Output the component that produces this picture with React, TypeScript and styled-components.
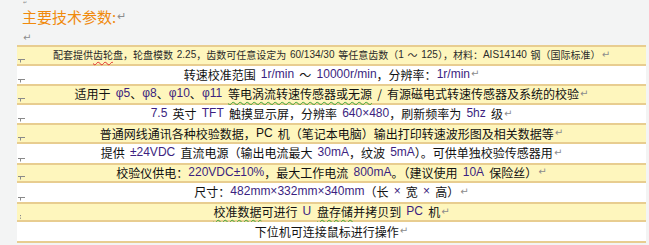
import React from "react";
import styled, { createGlobalStyle } from "styled-components";

const GlobalStyle = createGlobalStyle`
  html, body { margin: 0; padding: 0; background: #f3f4f4; }
  body { font-family: "Liberation Sans", "Noto Sans CJK SC", sans-serif; }
`;

const Page = styled.div`
  width: 649px;
  height: 245px;
  overflow: hidden;
  box-sizing: border-box;
  padding-left: 17px;
`;

const Para = styled.div<{ $h: number }>`
  height: ${(p) => p.$h}px;
  padding-left: 5px;
  display: flex;
  align-items: flex-end;
  overflow: hidden;
`;

const Title = styled.div`
  height: 23px;
  line-height: 23px;
  padding-left: 5px;
  font-family: "Noto Sans CJK SC", sans-serif;
  font-size: 15px;
  color: #f08a0c;
  display: flex;
  align-items: center;
`;

const PMark = styled.span<{ $size?: number; $lh?: number }>`
  font-family: "DejaVu Sans", sans-serif;
  font-size: ${(p) => p.$size ?? 10}px;
  line-height: ${(p) => p.$lh ?? 14}px;
  color: #8c8c8c;
  margin-left: 1px;
`;

const Table = styled.div`
  width: 629px;
  border-bottom: 2px solid #e8cd90;
`;

const Row = styled.div<{ $alt: boolean; $small?: boolean }>`
  position: relative;
  box-sizing: border-box;
  height: ${(p) => (p.$alt ? 20.5 : 18.7)}px;
  background: ${(p) => (p.$alt ? "#fef6bd" : "#ffffff")};
  border-top: ${(p) => (p.$alt ? "2px solid #e8cd90" : "none")};
  border-bottom: ${(p) => (p.$alt ? "2px solid #e8cd90" : "none")};
  display: flex;
  align-items: center;
  justify-content: center;
  padding-bottom: 1px;
  white-space: pre;
  word-spacing: ${(p) => (p.$small ? 1.5 : 2.5)}px;
  font-family: "Noto Sans CJK SC", sans-serif;
  font-size: ${(p) => (p.$small ? 10 : 12)}px;
  line-height: 15px;
  color: ${(p) => (p.$small ? "#2b2b2b" : "#111111")};
`;

const L = styled.span`
  font-family: "Liberation Sans", sans-serif;
  color: #3c1f80;
`;

const LPlain = styled.span`
  font-family: "Liberation Sans", sans-serif;
`;

const Wavy = styled.span<{ $c: string }>`
  text-decoration: underline wavy ${(p) => p.$c};
  text-decoration-thickness: 1px;
  text-underline-offset: 2px;
`;

const CellMark = styled.svg`
  position: absolute;
  left: 1px;
  bottom: 1px;
`;

const Tick = () => (
  <CellMark width="8" height="4" viewBox="0 0 8 4">
    <path d="M0 0.5 H7 M2.5 0.5 V3.5" stroke="#8a8a8a" strokeWidth="1" fill="none" />
  </CellMark>
);

const Dot = () => (
  <CellMark width="8" height="4" viewBox="0 0 8 4">
    <path d="M2.5 0 V1.2 M2.5 2.6 V3.8" stroke="#8a8a8a" strokeWidth="1" fill="none" />
  </CellMark>
);

const rows: { alt: boolean; small?: boolean; mark: "tick" | "dot" | "none"; content: React.ReactNode }[] = [
  {
    alt: true,
    small: true,
    mark: "tick",
    content: (
      <>
        {"配套提供"}<Wavy $c="#e03030">齿轮</Wavy>{"盘，轮盘模数 "}<LPlain>2.25</LPlain>{"，齿数可任意设定为 "}<LPlain>60/134/30</LPlain>{" 等任意齿数（"}<LPlain>1</LPlain>{" ～ "}<LPlain>125</LPlain>{"），材料："}<LPlain>AIS14140</LPlain>{" 钢（国际标准）"}
      </>
    ),
  },
  {
    alt: false,
    mark: "tick",
    content: (
      <>
        {"转速校准范围 "}<L>1r/min</L>{" ～ "}<L>10000r/min</L>{"，分辨率："}<L>1r/min</L>
      </>
    ),
  },
  {
    alt: true,
    mark: "tick",
    content: (
      <>
        {"适用于 "}<L>φ5</L>{"、"}<L>φ8</L>{"、"}<L>φ10</L>{"、"}<L>{"φ11 "}</L><Wavy $c="#3aa83a">等电涡流转速传感器或无源</Wavy>{" / 有源磁电式转速传感器及系统的校验"}
      </>
    ),
  },
  {
    alt: false,
    mark: "tick",
    content: (
      <>
        <L>7.5</L>{" 英寸 "}<L>TFT</L>{" 触摸显示屏，分辨率 "}<L>640×480</L>{"，刷新频率为 "}<L>5hz</L>{" 级"}
      </>
    ),
  },
  {
    alt: true,
    mark: "tick",
    content: (
      <>
        {"普通网线通讯各种校验数据，"}<LPlain>PC</LPlain>{" 机（笔记本电脑）输出打印转速波形图及相关数据等"}
      </>
    ),
  },
  {
    alt: false,
    mark: "tick",
    content: (
      <>
        {"提供 "}<L>±24VDC</L>{" 直流电源（输出电流最大 "}<L>30mA</L>{"，纹波 "}<L>5mA</L>{"）。可供单独校验传感器用"}
      </>
    ),
  },
  {
    alt: true,
    mark: "tick",
    content: (
      <>
        {"校验仪供电："}<L>220VDC±10%</L>{"，最大工作电流 "}<L>800mA</L>{"。（建议使用 "}<L>10A</L>{" 保险丝）"}
      </>
    ),
  },
  {
    alt: false,
    mark: "tick",
    content: (
      <>
        {"尺寸："}<L>482mm×332mm×340mm</L>{"（长 "}<L>×</L>{" 宽 "}<L>×</L>{" 高）"}
      </>
    ),
  },
  {
    alt: true,
    mark: "dot",
    content: (
      <>
        <Wavy $c="#3aa83a">校准数据</Wavy>{"可进行 "}<L>{"U "}</L><Wavy $c="#3aa83a">盘存储</Wavy>{"并拷贝到 "}<L>PC</L>{" 机"}
      </>
    ),
  },
  {
    alt: false,
    mark: "none",
    content: <>{"下位机可连接鼠标进行操作"}</>,
  },
];

export default function App() {
  return (
    <>
      <GlobalStyle />
      <Page>
        <Para $h={5}>
          <PMark $size={5} $lh={5}>↵</PMark>
        </Para>
        <Title>
          主要技术参数:<PMark $size={11} $lh={18}>↵</PMark>
        </Title>
        <Para $h={17}>
          <PMark>↵</PMark>
        </Para>
        <Table>
          {rows.map((r, i) => (
            <Row key={i} $alt={r.alt} $small={r.small}>
              {r.content}
              <PMark>↵</PMark>
              {r.mark === "tick" && <Tick />}
              {r.mark === "dot" && <Dot />}
            </Row>
          ))}
        </Table>
      </Page>
    </>
  );
}
